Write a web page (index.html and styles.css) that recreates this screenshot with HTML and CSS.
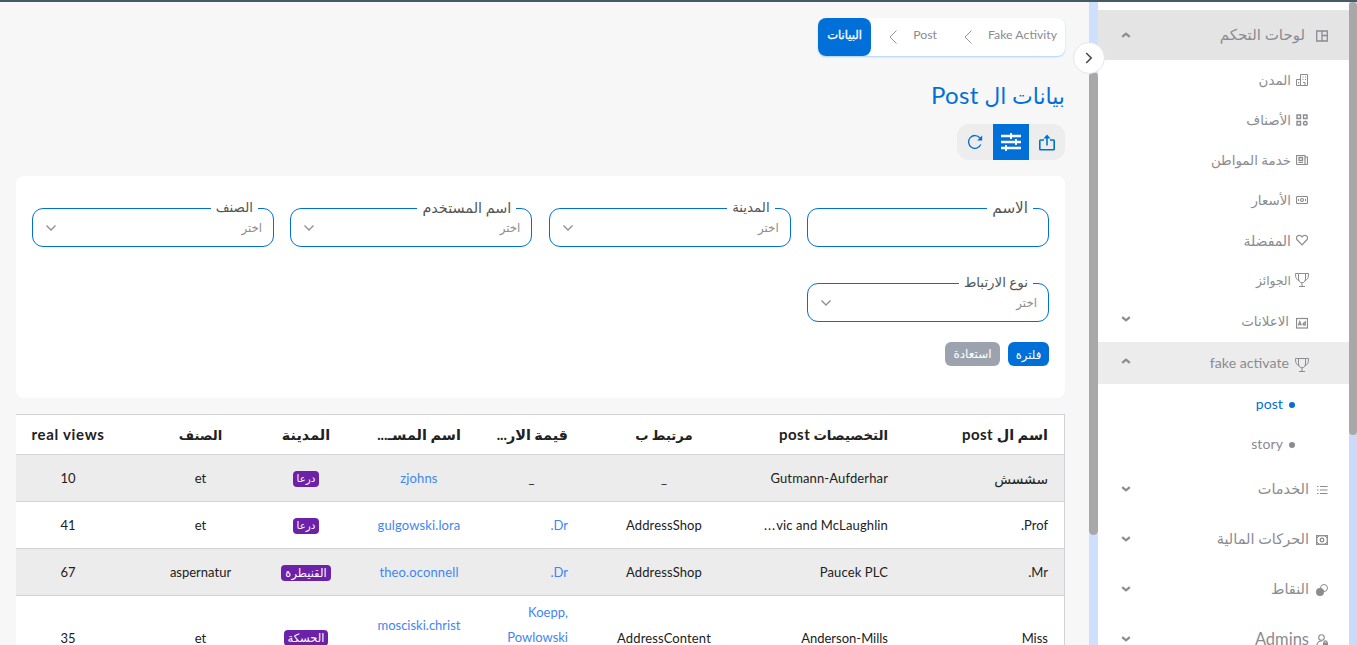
FILE: index.html
```html
<!DOCTYPE html>
<html lang="ar" dir="rtl">
<head>
<meta charset="utf-8">
<title>بيانات ال Post</title>
<link rel="stylesheet" href="styles.css">
</head>
<body>
<svg class="defs" width="0" height="0">
  <symbol id="up" viewBox="0 0 10 6"><path d="M1.200 4.900 5 1.600 8.800 4.900" fill="none" stroke="currentColor" stroke-width="2.200"/></symbol>
  <symbol id="down" viewBox="0 0 10 6"><path d="M1.200 1.100 5 4.400 8.800 1.100" fill="none" stroke="currentColor" stroke-width="2.200"/></symbol>
  <symbol id="drop" viewBox="0 0 12 8"><path d="M1.500 1.500 6 6 10.500 1.500" fill="none" stroke="currentColor" stroke-width="1.300"/></symbol>
  <symbol id="crumb" viewBox="0 0 8 14"><path d="M7.500.5 1 7l6.500 6.500" fill="none" stroke="currentColor"/></symbol>
  <symbol id="cup" viewBox="0 0 14 14"><path d="M3.500.5h7v5.500c0 5-7 5-7 0zM3.500.5H.5c0 4 .5 6 4 7.500M10.500.5h3c0 4-.5 6-4 7.500M7 10v3.500M4 13.500h6" fill="none" stroke="currentColor"/></symbol>
</svg>
<div class="topline"></div>
<div class="page">
  <aside class="side">
    <nav class="menu">
      <div class="group open"><svg class="ic" viewBox="0 0 12 12"><path d="M.7 1h10.600v10H.7zM6 1v10M6 5.500h5" fill="none" stroke="currentColor" stroke-width="1.300"/></svg><span class="t">لوحات التحكم</span><svg class="arr"><use href="#up"/></svg></div>
      <div class="item"><svg class="ic" viewBox="0 0 12 12"><path d="M4.500 11.500V.5h7v11H.5v-6h4M2.500 8v1.500M6.500 3h1m1.500 0h1M6.500 5.500h1m1.500 0h1M7 8.500h2v3" fill="none" stroke="currentColor"/></svg><span class="t">المدن</span></div>
      <div class="item"><svg class="ic" viewBox="0 0 12 12"><path d="M1 1h3.500v3.500H1zM7.500 1H11v3.500H7.500zM1 7.500h3.500V11H1z" fill="none" stroke="currentColor" stroke-width="1.400"/><circle cx="9.250" cy="9.250" r="1.800" fill="none" stroke="currentColor" stroke-width="1.400"/></svg><span class="t">الأصناف</span></div>
      <div class="item"><svg class="ic" viewBox="0 0 12 12"><path d="M.5 1.500h8.500v9H1.500a1 1 0 0 1-1-1zM9 3h2.500v6.500a1 1 0 0 1-1 1H9M2.500 8.500H7" fill="none" stroke="currentColor" stroke-width="1.200"/><path d="M3 3.500h3.500v3H3z" fill="none" stroke="currentColor" stroke-width="1.300"/></svg><span class="t">خدمة المواطن</span></div>
      <div class="item"><svg class="ic" viewBox="0 0 12 12"><rect x=".5" y="2.500" width="11" height="7" rx=".8" fill="none" stroke="currentColor" stroke-width="1.200"/><circle cx="6" cy="6" r="1.500" fill="none" stroke="currentColor" stroke-width="1.200"/><path d="M2.500 5v2M9.500 5v2" stroke="currentColor"/></svg><span class="t">الأسعار</span></div>
      <div class="item"><svg class="ic" viewBox="0 0 12 12"><path d="M6 10.800 1.300 6C-.6 3.800 1 1.300 3.200 1.300 4.700 1.300 5.500 2.200 6 3c.5-.8 1.300-1.700 2.800-1.700 2.200 0 3.800 2.500 1.900 4.700z" fill="none" stroke="currentColor" stroke-width="1.200"/></svg><span class="t wide">المفضلة</span></div>
      <div class="item"><svg class="ic cup"><use href="#cup"/></svg><span class="t narrow">الجوائز</span></div>
      <div class="item ads"><svg class="ic ad" viewBox="0 0 12 12"><rect x=".5" y="1.500" width="11" height="9.500" fill="none" stroke="currentColor" stroke-width="1.200"/><path d="m2.300 8.500 1.500-4 1.500 4M3 7.500h2M9.300 4v4.500M9.300 7a1 1 0 1 0-2.200 0 1 1 0 1 0 2.200 0" fill="none" stroke="currentColor" stroke-width="1.200"/></svg><span class="t">الاعلانات</span><svg class="arr"><use href="#down"/></svg></div>
      <div class="item active"><svg class="ic cup"><use href="#cup"/></svg><span class="t">fake activate</span><svg class="arr"><use href="#up"/></svg></div>
      <div class="sub current"><i></i><span class="t">post</span></div>
      <div class="sub"><i></i><span class="t">story</span></div>
      <div class="group"><svg class="ic" viewBox="0 0 12 12"><path d="M4 2.500h7.500M4 6h7.500M4 9.500h7.500M1 2.500h1.500M1 6h1.500M1 9.500h1.500" stroke="currentColor" stroke-width="1.100"/></svg><span class="t">الخدمات</span><svg class="arr"><use href="#down"/></svg></div>
      <div class="group"><svg class="ic" viewBox="0 0 12 12"><rect x=".7" y="1.700" width="10.600" height="8.600" fill="none" stroke="currentColor" stroke-width="1.300"/><circle cx="6" cy="6" r="1.800" fill="none" stroke="currentColor" stroke-width="1.300"/><path d="M1 4 3 2M11 4 9 2M1 8l2 2M11 8l-2 2" stroke="currentColor"/></svg><span class="t">الحركات المالية</span><svg class="arr"><use href="#down"/></svg></div>
      <div class="group"><svg class="ic" viewBox="0 0 12 12"><circle cx="8" cy="4" r="3.500" fill="none" stroke="currentColor"/><circle cx="4" cy="8" r="4" fill="currentColor"/></svg><span class="t">النقاط</span><svg class="arr"><use href="#down"/></svg></div>
      <div class="group"><svg class="ic" viewBox="0 0 12 12"><circle cx="5.500" cy="3.500" r="2.800" fill="none" stroke="currentColor" stroke-width="1.100"/><path d="M.8 12c.2-3.500 2-5 5-5M8 9V8c0-1.500 3-1.500 3 0v1" fill="none" stroke="currentColor" stroke-width="1.100"/><path d="M7 8.500h5V12H7z" fill="currentColor"/></svg><span class="t lat">Admins</span><svg class="arr"><use href="#down"/></svg></div>
    </nav>
    <div class="track"><div class="thumb"></div></div>
    <button class="toggle"><svg viewBox="0 0 8 12"><path d="m1.200 1 5 5-5 5" fill="none" stroke="currentColor" stroke-width="1.500"/></svg></button>
  </aside>
  <main class="main">
    <div class="crumbs"><span class="c1">Fake Activity</span><svg><use href="#crumb"/></svg><span class="c2">Post</span><svg><use href="#crumb"/></svg><b>البيانات</b></div>
    <h1><span>بيانات ال</span> <span class="lat">Post</span></h1>
    <div class="tools">
      <button><svg width="16" height="17" viewBox="0 0 16 17"><path d="M5 6H1.500Q.8 6 .8 6.700v8.400q0 .7.700.7h13q.7 0 .7-.7V6.700q0-.7-.7-.7H11M8 11.500V2" fill="none" stroke="currentColor" stroke-width="1.600"/><path d="M4.500 4.500 8 .5l3.500 4z" fill="currentColor"/></svg></button>
      <button class="on"><svg width="20" height="18" viewBox="0 0 20 18"><path d="M0 3h20M0 9h20M0 15h20" stroke="currentColor" stroke-width="2.300"/><path d="M10 0v6M15 6v6M5 12v6" stroke="currentColor" stroke-width="1.800"/></svg></button>
      <button><svg width="16" height="16" viewBox="0 0 16 16"><path d="M13.800 10.500A6.400 6.400 0 1 1 13 4" fill="none" stroke="currentColor" stroke-width="1.300"/><path d="M15.200 1.500v5H10.200z" fill="currentColor"/></svg></button>
    </div>
    <section class="filters">
      <div class="fields">
        <fieldset><legend class="name">الاسم</legend></fieldset>
        <fieldset><legend>المدينة</legend><span>اختر</span><svg><use href="#drop"/></svg></fieldset>
        <fieldset><legend class="wide">اسم المستخدم</legend><span>اختر</span><svg><use href="#drop"/></svg></fieldset>
        <fieldset><legend>الصنف</legend><span>اختر</span><svg><use href="#drop"/></svg></fieldset>
        <fieldset><legend>نوع الارتباط</legend><span>اختر</span><svg><use href="#drop"/></svg></fieldset>
      </div>
      <div class="actions"><button class="go">فلترة</button><button class="reset">استعادة</button></div>
    </section>
    <section class="table">
      <div class="row head"><div>اسم ال <em>post</em></div><div class="mediumtext">التخصيصات <em>post</em></div><div class="tight">مرتبط ب</div><div>قيمة الار...</div><div>اسم المسـ...</div><div>المدينة</div><div class="tight">الصنف</div><div><em class="views">real views</em></div></div>
      <div class="row odd"><div class="big">سشسش</div><div class="lt">Gutmann-Aufderhar</div><div>_</div><div class="mid">_</div><div class="link lt">zjohns</div><div><mark>درعا</mark></div><div>et</div><div>10</div></div>
      <div class="row"><div>Prof.</div><div class="lt" dir="ltr"><span class="dots">...</span>vic and McLaughlin</div><div class="lt">AddressShop</div><div class="link">Dr.</div><div class="link lt">gulgowski.lora</div><div><mark>درعا</mark></div><div>et</div><div>41</div></div>
      <div class="row odd"><div>Mr.</div><div class="lt">Paucek PLC</div><div class="lt">AddressShop</div><div class="link">Dr.</div><div class="link lt">theo.oconnell</div><div><mark class="long">القنيطرة</mark></div><div>aspernatur</div><div>67</div></div>
      <div class="row tall"><div>Miss</div><div>Anderson-Mills</div><div class="lt">AddressContent</div><div class="link three">Koepp, Powlowski</div><div class="link two">mosciski.christ</div><div><mark class="long">الحسكة</mark></div><div>et</div><div>35</div></div>
    </section>
  </main>
  <div class="track outer"><div class="thumb"></div></div>
</div>
</body>
</html>
```
FILE: styles.css
```css
* { box-sizing: border-box; }
html { height: 100%; overflow: hidden; }
body { margin: 0; height: 645px; overflow: hidden; background: #f7f7f7; font: 13px Lato, "DejaVu Sans", sans-serif; color: #212121; }
button { border: 0; padding: 0; font: inherit; }
.defs { position: absolute; }
.topline { height: 2px; background: #455a64; }
.page { display: grid; grid-template-columns: 8px 260px 1089px; height: 643px; overflow: hidden; }
.track { background: #cfe0ff; }
.outer { grid-column: 1; grid-row: 1; background: #c9dbf8; }
.thumb { background: #a8a8a8; border-radius: 5px; }
.outer .thumb { height: 433px; }
.side { grid-column: 2; grid-row: 1; position: relative; display: grid; grid-template-columns: 251px 9px; height: 643px; background: #fff; }
.side .track { padding-top: 70px; }
.side .thumb { height: 463px; }
.menu { padding-top: 8px; height: 643px; overflow: hidden; color: #8b8b90; }
.group, .item, .sub { display: flex; align-items: center; }
.group { height: 50px; padding: 0 21px 0 27px; font-size: 14.500px; }
.group .t { margin-top: -1px; }
.group .lat { font-size: 16.500px; line-height: 18px; }
.item { height: 40px; padding: 0 41px 0 27px; font-size: 13.400px; }
.item .narrow { font-size: 12.300px; }
.item .wide { font-size: 14px; }
.sub { height: 40px; padding-right: 54px; gap: 9px; font-size: 14px; }
.sub .t { margin: -1px -3px 0 0; letter-spacing: .1px; }
.group.open { background: #e4e4e4; font-size: 15px; }
.ic { width: 12px; height: 12px; flex: none; }
.group .ic { margin-left: 7px; margin-top: 1px; }
.group.open .ic { margin-left: 11px; }
.item .ic { margin-left: 5px; }
.item .cup { width: 14px; height: 14px; margin-right: -1px; margin-left: 4px; }
.item.ads, .item.active { height: 42px; }
.item .ad { margin-left: 7px; margin-top: 3px; }
.item.active { background: #ececec; font-size: 14.200px; }
.item.active .t { margin-top: -2px; }
.item.active .cup { margin-left: 6px; margin-top: 3px; }
.arr { width: 10px; height: 6px; margin-right: auto; margin-left: -4px; }
.item .arr { margin-top: -4px; }
.sub i { width: 6px; height: 6px; margin-top: 1px; border-radius: 50%; background: currentColor; }
.current { color: #0070d8; }
.toggle { position: absolute; left: -16px; top: 40px; width: 32px; height: 32px; border-radius: 50%; background: #fff; border: 1px solid #e0e6f0; display: grid; place-items: center; color: #444; }
.toggle svg { width: 8px; height: 12px; }
.main { grid-column: 3; grid-row: 1; height: 643px; overflow: hidden; padding: 16px 24px 0 16px; }
.crumbs { width: 247px; height: 38px; border-radius: 8px; background: #fff; box-shadow: 0 1px 2px #a8d2ff; display: flex; padding-right: 8px; line-height: 34px; color: #8b8b90; white-space: nowrap; }
.crumbs svg { flex: none; width: 8px; height: 14px; margin-top: 12px; color: #999; }
.c1, .c2 { flex: none; font-size: 12.300px; }
.c1 { width: 69px; margin-left: 16px; }
.c2 { width: 24px; margin: 0 27px 0 16px; }
.crumbs b { width: 53px; margin-right: auto; background: #0070d8; color: #fff; border-radius: 8px; text-align: center; font-weight: 400; font-size: 11.500px; -webkit-text-stroke: .3px #fff; }
h1 { margin: 19px 0 9px; height: 40px; line-height: 40px; color: #0070d8; font-size: 22px; font-weight: 400; white-space: nowrap; }
h1 .lat { font-size: 24px; letter-spacing: .3px; }
.tools { width: 108px; height: 36px; display: flex; border-radius: 12px; overflow: hidden; background: #ededed; }
.tools button { width: 36px; height: 36px; display: grid; place-items: center; background: none; color: #0070d8; }
.tools .on { background: #0070d8; color: #fff; }
.filters { margin-top: 16px; height: 222px; background: #fff; border-radius: 8px; padding: 24px 16px; }
.fields { display: grid; grid-template-columns: repeat(4, 242px); justify-content: space-between; row-gap: 28px; }
fieldset { height: 47px; margin: 0; min-width: 0; border: 1px solid #0070d8; border-radius: 11px; padding: 0 11px; display: flex; align-items: flex-start; justify-content: space-between; color: #8f8f8f; font-size: 11.800px; line-height: 24px; }
legend { margin-right: 4px; padding: 0 5px; height: 16px; line-height: 15px; color: #555; font-size: 13.400px; }
legend.name { font-size: 15.200px; }
legend.wide { font-size: 14.400px; }
fieldset svg { width: 12px; height: 8px; margin: 8px 0 0 1px; }
.actions { display: flex; gap: 8px; margin-top: 20px; }
.actions button { height: 24px; border-radius: 6px; color: #fff; background: #0070d8; width: 41px; font-size: 11.700px; line-height: 22px; }
.actions .reset { width: 55px; background: #9ca3af; font-size: 12px; }
.table { margin-top: 16px; border: 1px solid #d1d3d8; border-width: 1px 1px 0 0; background: #fff; }
.row { display: grid; grid-template-columns: 160px 160px 160px 105px 120px 106px 105px 132px; height: 47px; align-items: center; border-bottom: 1px solid #d1d3d8; text-align: center; }
.odd { background: #ececec; }
.row > div { white-space: nowrap; }
.row > div:nth-child(-n+2) { text-align: right; padding-right: 16px; }
.row > div:nth-child(4) { text-align: right; padding-right: 16px; }
.row > .mid:nth-child(4) { text-align: center; padding: 0; }
.row > div:last-child { padding-right: 28px; }
.head { height: 40px; font-weight: 700; font-size: 14.400px; line-height: 18px; }
.head .mediumtext { font-size: 13.300px; }
.head .tight { font-size: 13.200px; }
.head em { font-style: normal; font-size: 15px; letter-spacing: .5px; }
.head .views { letter-spacing: .7px; }
.lt { letter-spacing: .13px; }
.big { font-size: 13.800px; }
.dots { letter-spacing: 1px; }
.link { color: #4285f4; }
mark { display: inline-block; background: #6b21a8; color: #fff; border-radius: 4px; height: 16px; padding: 0 4px; font-size: 10.300px; line-height: 15px; vertical-align: middle; }
mark.long { font-size: 11.500px; }
.tall { height: 84px; }
.row > .link.three { white-space: normal; line-height: 25px; padding: 4px 16px 0 20px; align-self: start; }
.row > .link.two { align-self: start; padding: 21px 0 0 4px; margin-left: -4px; }
```
